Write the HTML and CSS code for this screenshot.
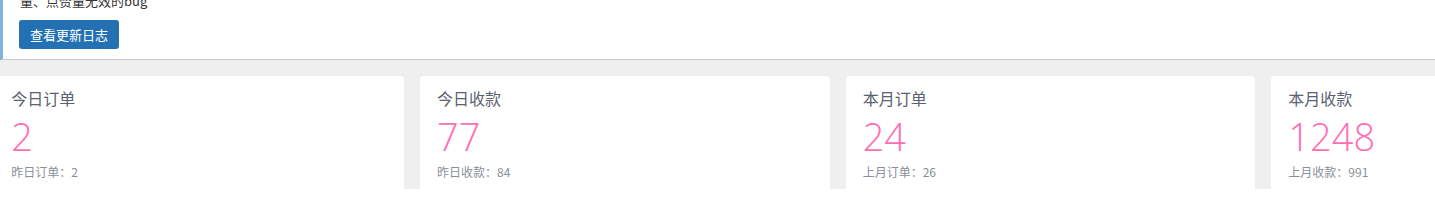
FILE: index.html
```html
<!DOCTYPE html>
<html lang="zh-CN">
<head>
<meta charset="utf-8">
<title>Dashboard</title>
<link rel="stylesheet" href="styles.css">
</head>
<body>
  <div class="notice">
    <p class="notice-text">量、点赞量无效的bug</p>
    <button class="btn-log">查看更新日志</button>
  </div>
  <div class="stats-area">
    <div class="stats-row">
      <div class="card">
        <div class="card-title">今日订单</div>
        <div class="card-value">2</div>
        <div class="card-sub">昨日订单：2</div>
      </div>
      <div class="card">
        <div class="card-title">今日收款</div>
        <div class="card-value">77</div>
        <div class="card-sub">昨日收款：84</div>
      </div>
      <div class="card">
        <div class="card-title">本月订单</div>
        <div class="card-value">24</div>
        <div class="card-sub">上月订单：26</div>
      </div>
      <div class="card">
        <div class="card-title">本月收款</div>
        <div class="card-value">1248</div>
        <div class="card-sub">上月收款：991</div>
      </div>
    </div>
  </div>
</body>
</html>
```
FILE: styles.css
```css
html, body {
  margin: 0;
  padding: 0;
  background: #ffffff;
  overflow: hidden;
}
body {
  font-family: "Microsoft YaHei", "Noto Sans CJK SC", "Noto Sans", sans-serif;
}
.notice {
  margin-top: -9px;
  background: #ffffff;
  border-left: 3px solid #7fb1e3;
  border-bottom: 1px solid #c6c6c6;
  padding: 0 0 10px 16px;
}
.notice-text {
  margin: 0;
  font-size: 13px;
  line-height: 20px;
  color: #333333;
  padding-left: 1px;
}
.btn-log {
  margin-top: 9px;
  display: block;
  width: 100px;
  height: 29px;
  border: none;
  border-radius: 3px;
  background: #2371b2;
  color: #ffffff;
  font-family: inherit;
  font-size: 13px;
  padding: 0;
  cursor: pointer;
}
.stats-area {
  background: #efefef;
  height: 129px;
  box-sizing: border-box;
  padding-top: 16px;
  overflow: hidden;
}
.stats-row {
  display: flex;
  gap: 16px;
  margin-left: -5.67px;
}
.card {
  flex: 0 0 409.67px;
  height: 113px;
  box-sizing: border-box;
  background: #ffffff;
  border-radius: 4px 4px 0 0;
  padding: 12px 17px 0;
}
.card-title {
  font-size: 16px;
  line-height: 20px;
  color: #5a6170;
}
.card-value {
  margin-top: 6px;
  font-family: "Open Sans", "Noto Sans", sans-serif;
  font-weight: 300;
  font-size: 38px;
  line-height: 44px;
  color: #ff6eb4;
}
.card-sub {
  margin-top: 6px;
  font-size: 12px;
  line-height: 16px;
  color: #8a8f99;
}
```
